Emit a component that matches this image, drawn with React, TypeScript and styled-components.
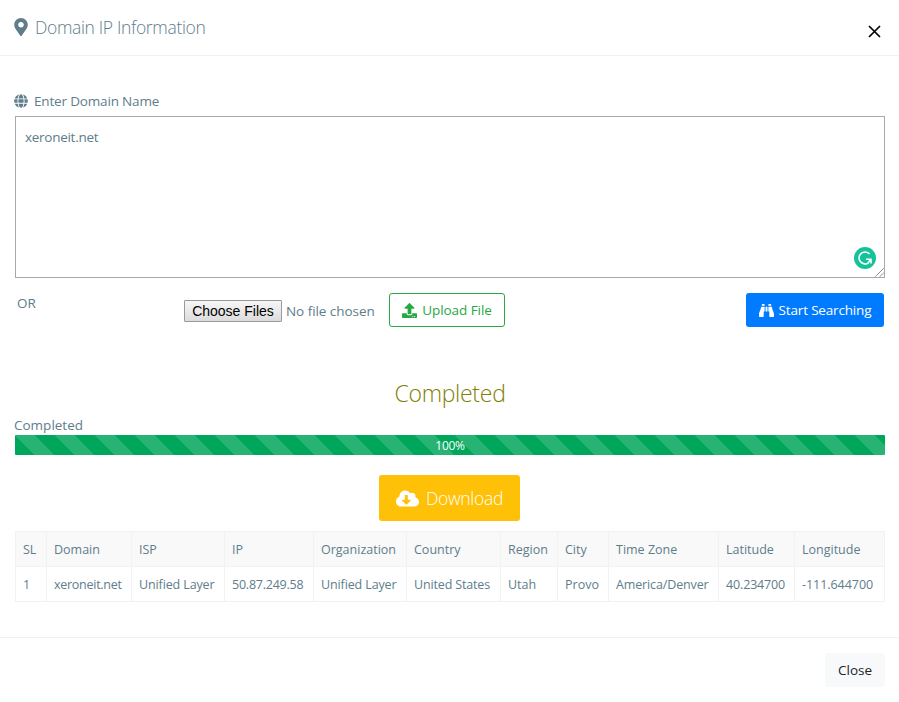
import React from "react";
import styled, { createGlobalStyle } from "styled-components";
import {
  FaBinoculars,
  FaCloudDownloadAlt,
  FaGlobe,
  FaMapMarkerAlt,
  FaUpload,
} from "react-icons/fa";

const GlobalStyle = createGlobalStyle`
  *, *::before, *::after { box-sizing: border-box; }
  body {
    margin: 0;
    background: #fff;
    color: #607d8b;
    font: 400 13.5px/20px "Open Sans", "Noto Sans", sans-serif;
  }
  svg { display: block; flex: none; }
`;

const Text = styled.span<{ $track?: number }>`
  letter-spacing: ${(p) => p.$track ?? 0}px;
  white-space: nowrap;
`;

const Modal = styled.div`
  width: 899px;
  height: 702px;
  overflow: hidden;
  display: flex;
  flex-direction: column;
`;

const Header = styled.header`
  height: 56px;
  padding: 0 17px 0 12px;
  border-bottom: 1px solid #f0f1f2;
  display: flex;
  align-items: center;
  justify-content: space-between;
`;

const Title = styled.h1`
  margin: 0;
  display: flex;
  align-items: center;
  gap: 5px;
  font-size: 17.5px;
  font-weight: 300;
  padding-bottom: 1px;
`;

const CloseIcon = styled.button`
  margin: 8px 0 0;
  padding: 0;
  border: 0;
  background: none;
  color: #000;
`;

const Body = styled.main`
  height: 581px;
  padding: 35px 14px 0 15px;
`;

const Label = styled.label`
  display: flex;
  align-items: center;
  height: 20px;
  gap: 6px;
  margin-left: -1px;
`;

const InputWrap = styled.div`
  position: relative;
  height: 162px;
  margin-top: 5px;
`;

const DomainInput = styled.textarea`
  display: block;
  width: 100%;
  height: 100%;
  margin: 0;
  padding: 10px 9px;
  border: 1px solid #a9a9a9;
  background: #fff;
  color: #607d8b;
  font: inherit;
  letter-spacing: -0.28px;
  resize: none;
  outline: none;
`;

const Grammar = styled.svg`
  position: absolute;
  right: 9px;
  bottom: 9px;
`;

const Grip = styled.svg`
  position: absolute;
  right: 1px;
  bottom: 1px;
`;

const Actions = styled.div`
  display: flex;
  height: 34px;
  margin-top: 15px;
`;

const Or = styled.div`
  width: 167px;
  padding-left: 2px;
`;

const FilePicker = styled.div`
  display: flex;
  align-items: center;
  width: 207px;
  gap: 4px;
  padding: 2px 0 0 2px;
`;

const ChooseButton = styled.button`
  width: 98px;
  height: 22px;
  padding: 0;
  border: 1px solid #999;
  border-radius: 1px;
  background: linear-gradient(#f6f6f6, #dcdcdc);
  color: #000;
  font: 14px/18px "Liberation Sans", Arial, sans-serif;
  white-space: nowrap;
`;

const Button = styled.button<{ $kind: "outline" | "primary" | "light" | "warning" }>`
  display: flex;
  align-items: center;
  justify-content: center;
  padding: 0;
  font: inherit;
  height: 34px;
  border-radius: 3px;
  border: 1px solid transparent;
  gap: 5px;
  ${(p) => p.$kind === "outline" && "width:116px;border-color:#28a745;color:#28a745;background:#fff;"}
  ${(p) => p.$kind === "primary" && "width:138px;margin-left:auto;margin-right:1px;color:#fff;background:#007bff;"}
  ${(p) => p.$kind === "light" && "width:60px;color:#212529;background:#f8f9fa;"}
  ${(p) =>
    p.$kind === "warning" &&
    "width:141px;height:46px;margin:20px 0 0 364px;color:#fff;background:#ffc107;font-size:17.5px;font-weight:300;gap:7px;"}
`;

const Status = styled.h2`
  margin: 50px 0 0;
  height: 33px;
  line-height: 33px;
  text-align: center;
  font-size: 23px;
  font-weight: 300;
  color: #808000;
`;

const ProgressLabel = styled.div`
  height: 20px;
  margin: 5px 0 0 -1px;
`;

const Progress = styled.div`
  height: 20px;
  color: #fff;
  font-size: 12px;
  line-height: 21px;
  text-align: center;
  border-radius: 1px;
  background: linear-gradient(
      45deg,
      rgba(255, 255, 255, 0.15) 25%,
      transparent 25%,
      transparent 50%,
      rgba(255, 255, 255, 0.15) 50%,
      rgba(255, 255, 255, 0.15) 75%,
      transparent 75%
    )
    0 0 / 40px 40px #00a65a;
`;

const Table = styled.table`
  width: 870px;
  margin-top: 10px;
  border-collapse: collapse;
  table-layout: fixed;
  font-size: 12.5px;

  th,
  td {
    height: 35px;
    padding: 1px 0 0 7px;
    border: 1px solid #f1f2f3;
    font-weight: 400;
    text-align: left;
    white-space: nowrap;
  }
  th {
    background: #f9f9f9;
  }
`;

const Footer = styled.footer`
  display: flex;
  justify-content: flex-end;
  border-top: 1px solid #f0f1f2;
  padding: 15px 14px 0 0;
`;

type Column = { name: string; value: string; width: number; track: number };

const columns: Column[] = [
  { name: "SL", value: "1", width: 31, track: 0 },
  { name: "Domain", value: "xeroneit.net", width: 85, track: -0.27 },
  { name: "ISP", value: "Unified Layer", width: 93, track: -0.12 },
  { name: "IP", value: "50.87.249.58", width: 89, track: -0.23 },
  { name: "Organization", value: "Unified Layer", width: 93, track: -0.12 },
  { name: "Country", value: "United States", width: 94, track: -0.15 },
  { name: "Region", value: "Utah", width: 57, track: 0 },
  { name: "City", value: "Provo", width: 51, track: 0 },
  { name: "Time Zone", value: "America/Denver", width: 110, track: -0.13 },
  { name: "Latitude", value: "40.234700", width: 76, track: -0.15 },
  { name: "Longitude", value: "-111.644700", width: 90, track: -0.05 },
];

export default function App() {
  return (
    <Modal>
      <GlobalStyle />
      <Header>
        <Title>
          <FaMapMarkerAlt size={18} />
          <Text $track={-0.34}>Domain IP Information</Text>
        </Title>
        <CloseIcon aria-label="Close dialog">
          <svg width="15" height="15" viewBox="0 0 15 15" stroke="currentColor" strokeWidth="1.7">
            <path d="M2 2l11 11M13 2L2 13" />
          </svg>
        </CloseIcon>
      </Header>
      <Body>
        <Label>
          <FaGlobe size={14} />
          <Text $track={-0.17}>Enter Domain Name</Text>
        </Label>
        <InputWrap>
          <DomainInput defaultValue="xeroneit.net" spellCheck={false} />
          <Grammar width="22" height="22" viewBox="0 0 22 22" fill="none">
            <circle cx="11" cy="11" r="11" fill="#15c39a" />
            <path d="M15.6 7A6 6 0 1 0 14.6 15.8M12 12.2h5v4.4M16.6 12.4l-2.4 3.4" stroke="#fff" strokeWidth="1.6" />
          </Grammar>
          <Grip width="9" height="9" viewBox="0 0 9 9" stroke="#555" strokeWidth="1">
            <path d="M.5 8.5l8-8M5 8.5L8.5 5" strokeDasharray="1.2 .3" />
          </Grip>
        </InputWrap>
        <Actions>
          <Or>
            <Text>OR</Text>
          </Or>
          <FilePicker>
            <ChooseButton>Choose Files</ChooseButton>
            <Text $track={-0.05}>No file chosen</Text>
          </FilePicker>
          <Button $kind="outline">
            <FaUpload size={15} />
            <Text $track={-0.05}>Upload File</Text>
          </Button>
          <Button $kind="primary">
            <FaBinoculars size={15} />
            <Text $track={-0.17}>Start Searching</Text>
          </Button>
        </Actions>
        <Status>
          <Text $track={-0.28}>Completed</Text>
        </Status>
        <ProgressLabel>
          <Text>Completed</Text>
        </ProgressLabel>
        <Progress>
          <Text $track={-0.3}>100%</Text>
        </Progress>
        <Button $kind="warning">
          <FaCloudDownloadAlt size={23} />
          <Text $track={-0.3}>Download</Text>
        </Button>
        <Table>
          <colgroup>
            {columns.map((c) => (
              <col key={c.name} width={c.width} />
            ))}
          </colgroup>
          <thead>
            <tr>
              {columns.map((c) => (
                <th key={c.name}>
                  <Text>{c.name}</Text>
                </th>
              ))}
            </tr>
          </thead>
          <tbody>
            <tr>
              {columns.map((c) => (
                <td key={c.name}>
                  <Text $track={c.track}>{c.value}</Text>
                </td>
              ))}
            </tr>
          </tbody>
        </Table>
      </Body>
      <Footer>
        <Button $kind="light">
          <Text>Close</Text>
        </Button>
      </Footer>
    </Modal>
  );
}
